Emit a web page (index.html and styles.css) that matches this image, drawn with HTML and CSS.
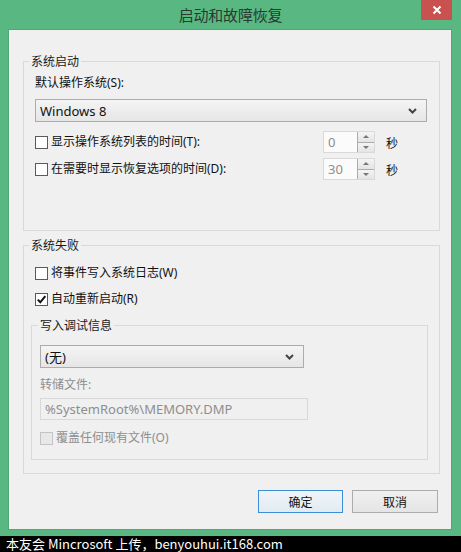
FILE: index.html
```html
<!DOCTYPE html>
<html lang="zh-CN">
<head>
<meta charset="utf-8">
<title>启动和故障恢复</title>
<link rel="stylesheet" href="styles.css">
</head>
<body>
<div class="window">
  <div class="titlebar">
    <span class="title">启动和故障恢复</span>
    <button class="close" type="button" aria-label="关闭">
      <svg width="10" height="10" viewBox="0 0 10 10"><path d="M1.5 1.5 L8.5 8.5 M8.5 1.5 L1.5 8.5" stroke="#fff" stroke-width="2" fill="none"/></svg>
    </button>
  </div>
  <div class="client">
    <fieldset class="group g1">
      <legend>系统启动</legend>
      <div class="label">默认操作系统(S):</div>
      <div class="select sel-os">
        <span>Windows 8</span>
        <svg class="chev" width="9" height="6" viewBox="0 0 9 6"><path d="M1 1 L4.5 4.5 L8 1" stroke="#444" stroke-width="2" fill="none"/></svg>
      </div>
      <div class="timerow first">
        <div class="check"><span class="box"></span><span>显示操作系统列表的时间(T):</span></div>
        <div class="spin"><span class="val">0</span><span class="spinbtns"><span class="sb up"></span><span class="sb dn"></span></span></div>
        <span class="unit">秒</span>
      </div>
      <div class="timerow second">
        <div class="check"><span class="box"></span><span>在需要时显示恢复选项的时间(D):</span></div>
        <div class="spin"><span class="val">30</span><span class="spinbtns"><span class="sb up"></span><span class="sb dn"></span></span></div>
        <span class="unit">秒</span>
      </div>
    </fieldset>

    <fieldset class="group g2">
      <legend>系统失败</legend>
      <div class="check row3"><span class="box"></span><span>将事件写入系统日志(W)</span></div>
      <div class="check row4"><span class="box checked"><svg width="11" height="11" viewBox="0 0 11 11"><path d="M1.8 5.6 L4.3 8.3 L9.3 2.2" stroke="#111" stroke-width="2" fill="none"/></svg></span><span>自动重新启动(R)</span></div>
      <fieldset class="group inner">
        <legend>写入调试信息</legend>
        <div class="select sel-dbg">
          <span>(无)</span>
          <svg class="chev" width="9" height="6" viewBox="0 0 9 6"><path d="M1 1 L4.5 4.5 L8 1" stroke="#444" stroke-width="2" fill="none"/></svg>
        </div>
        <div class="label disabled dump">转储文件:</div>
        <div class="textfield">%SystemRoot%\MEMORY.DMP</div>
        <div class="check disabled overwrite"><span class="box"></span><span>覆盖任何现有文件(O)</span></div>
      </fieldset>
    </fieldset>

    <div class="buttons">
      <button class="btn default" type="button">确定</button>
      <button class="btn" type="button">取消</button>
    </div>
  </div>
</div>
<div class="watermark">本友会 Mincrosoft 上传，benyouhui.it168.com</div>
</body>
</html>
```

FILE: styles.css
```css
* { box-sizing: border-box; }

html, body {
  margin: 0;
  padding: 0;
  background: #000;
}

body {
  width: 461px;
  height: 552px;
  overflow: hidden;
  font-family: "Noto Sans", "Noto Sans CJK SC", sans-serif;
  font-size: 12px;
  color: #111;
}

.window {
  position: relative;
  height: 536px;
  background: #59b881;
  display: flex;
  flex-direction: column;
}

.titlebar {
  height: 30px;
  display: flex;
  align-items: center;
  justify-content: center;
  padding-bottom: 2px;
}

.title {
  font-family: "Noto Sans CJK SC", sans-serif;
  font-size: 15px;
  color: #2a3a30;
  letter-spacing: -0.2px;
}

.close {
  position: absolute;
  top: 0;
  right: 9px;
  width: 31px;
  height: 20px;
  border: 0;
  padding: 0;
  background: #c9514f;
  display: flex;
  align-items: center;
  justify-content: center;
}

.client {
  flex: 1;
  margin: 0 10px 7px 9px;
  background: #f0f0f0;
  box-shadow: 0 0 0 1px #4fa773;
  padding: 23px 11px 0 14px;
  display: flex;
  flex-direction: column;
}

.group {
  margin: 0;
  min-width: 0;
  border: 1px solid #d9d9d9;
}

.group > legend {
  font-family: "Noto Sans CJK SC", sans-serif;
  line-height: 16px;
  padding: 0 2px;
  margin-left: -6px;
  color: #1a1a1a;
}

.g1 {
  padding: 6px 12px 50px 11px;
}

.g2 {
  margin-top: 6px;
  padding: 12px 12px 13px 11px;
}

.inner {
  margin: 10px -1px 0 -4px;
  padding: 12px 10px 13px 8px;
}

.inner > legend {
  margin-left: -2px;
}

.label {
  line-height: 16px;
  height: 16px;
}

.disabled {
  color: #8e8e8e;
}

.select {
  height: 23px;
  border: 1px solid #acacac;
  background: linear-gradient(#f4f4f4, #e6e6e6);
  display: flex;
  align-items: center;
  justify-content: space-between;
  padding: 0 9px 0 4px;
  font-size: 13px;
  color: #111;
}

.sel-os {
  margin-top: 8px;
}

.sel-dbg {
  width: 264px;
}

.chev {
  margin-top: 1px;
}

.timerow {
  display: flex;
  align-items: center;
  height: 22px;
}

.timerow.first { margin-top: 9px; }
.timerow.second { margin-top: 5px; }

.timerow .check { flex: 1; }

.check {
  display: flex;
  align-items: center;
  height: 16px;
  line-height: 16px;
}

.box {
  width: 13px;
  height: 13px;
  border: 1px solid #5a5a5a;
  background: #fff;
  margin-right: 3px;
  flex: none;
  display: flex;
  align-items: center;
  justify-content: center;
}

.check.disabled .box {
  border-color: #c4c4c4;
  background: #e8e8e8;
}

.row3 { margin-top: 0; }
.row4 { margin-top: 10px; }

.spin {
  width: 52px;
  height: 22px;
  border: 1px solid #d9d9d9;
  background: #fbfbfb;
  display: flex;
  align-items: stretch;
}

.val {
  flex: 1;
  padding-left: 4px;
  line-height: 20px;
  color: #8e8e8e;
  font-size: 13px;
}

.spinbtns {
  width: 17px;
  display: flex;
  flex-direction: column;
  border-left: 1px solid #acacac;
}

.sb {
  flex: 1;
  background: linear-gradient(#f4f4f4, #e4e4e4);
  display: flex;
  align-items: center;
  justify-content: center;
}

.sb.up { border-bottom: 1px solid #acacac; }

.sb.up::before {
  content: "";
  border-left: 3px solid transparent;
  border-right: 3px solid transparent;
  border-bottom: 3px solid #777;
}

.sb.dn::before {
  content: "";
  border-left: 3px solid transparent;
  border-right: 3px solid transparent;
  border-top: 3px solid #777;
}

.unit {
  margin-left: 11px;
  margin-right: 29px;
  font-family: "Noto Sans CJK SC", sans-serif;
}

.dump {
  margin-top: 9px;
}

.textfield {
  margin-top: 5px;
  width: 268px;
  height: 22px;
  border: 1px solid #d8d8d8;
  background: #f0f0f0;
  color: #8e8e8e;
  font-size: 13px;
  line-height: 20px;
  padding-left: 4px;
}

.overwrite {
  margin-top: 10px;
}

.buttons {
  margin-top: 16px;
  display: flex;
  justify-content: flex-end;
  gap: 9px;
  padding-right: 2px;
}

.btn {
  width: 85px;
  height: 23px;
  border: 1px solid #acacac;
  background: linear-gradient(#f0f0f0, #e5e5e5);
  font-family: "Noto Sans CJK SC", sans-serif;
  font-size: 12px;
  color: #111;
  padding: 0;
}

.btn + .btn { width: 86px; }

.btn.default {
  border-color: #3c8fd6;
  background: linear-gradient(#eef4f9, #e3ebf2);
}

.watermark {
  height: 16px;
  line-height: 16px;
  padding-left: 6px;
  color: #fff;
  background: #000;
  font-family: "Noto Sans CJK SC", sans-serif;
  font-size: 13px;
  white-space: nowrap;
}
```
